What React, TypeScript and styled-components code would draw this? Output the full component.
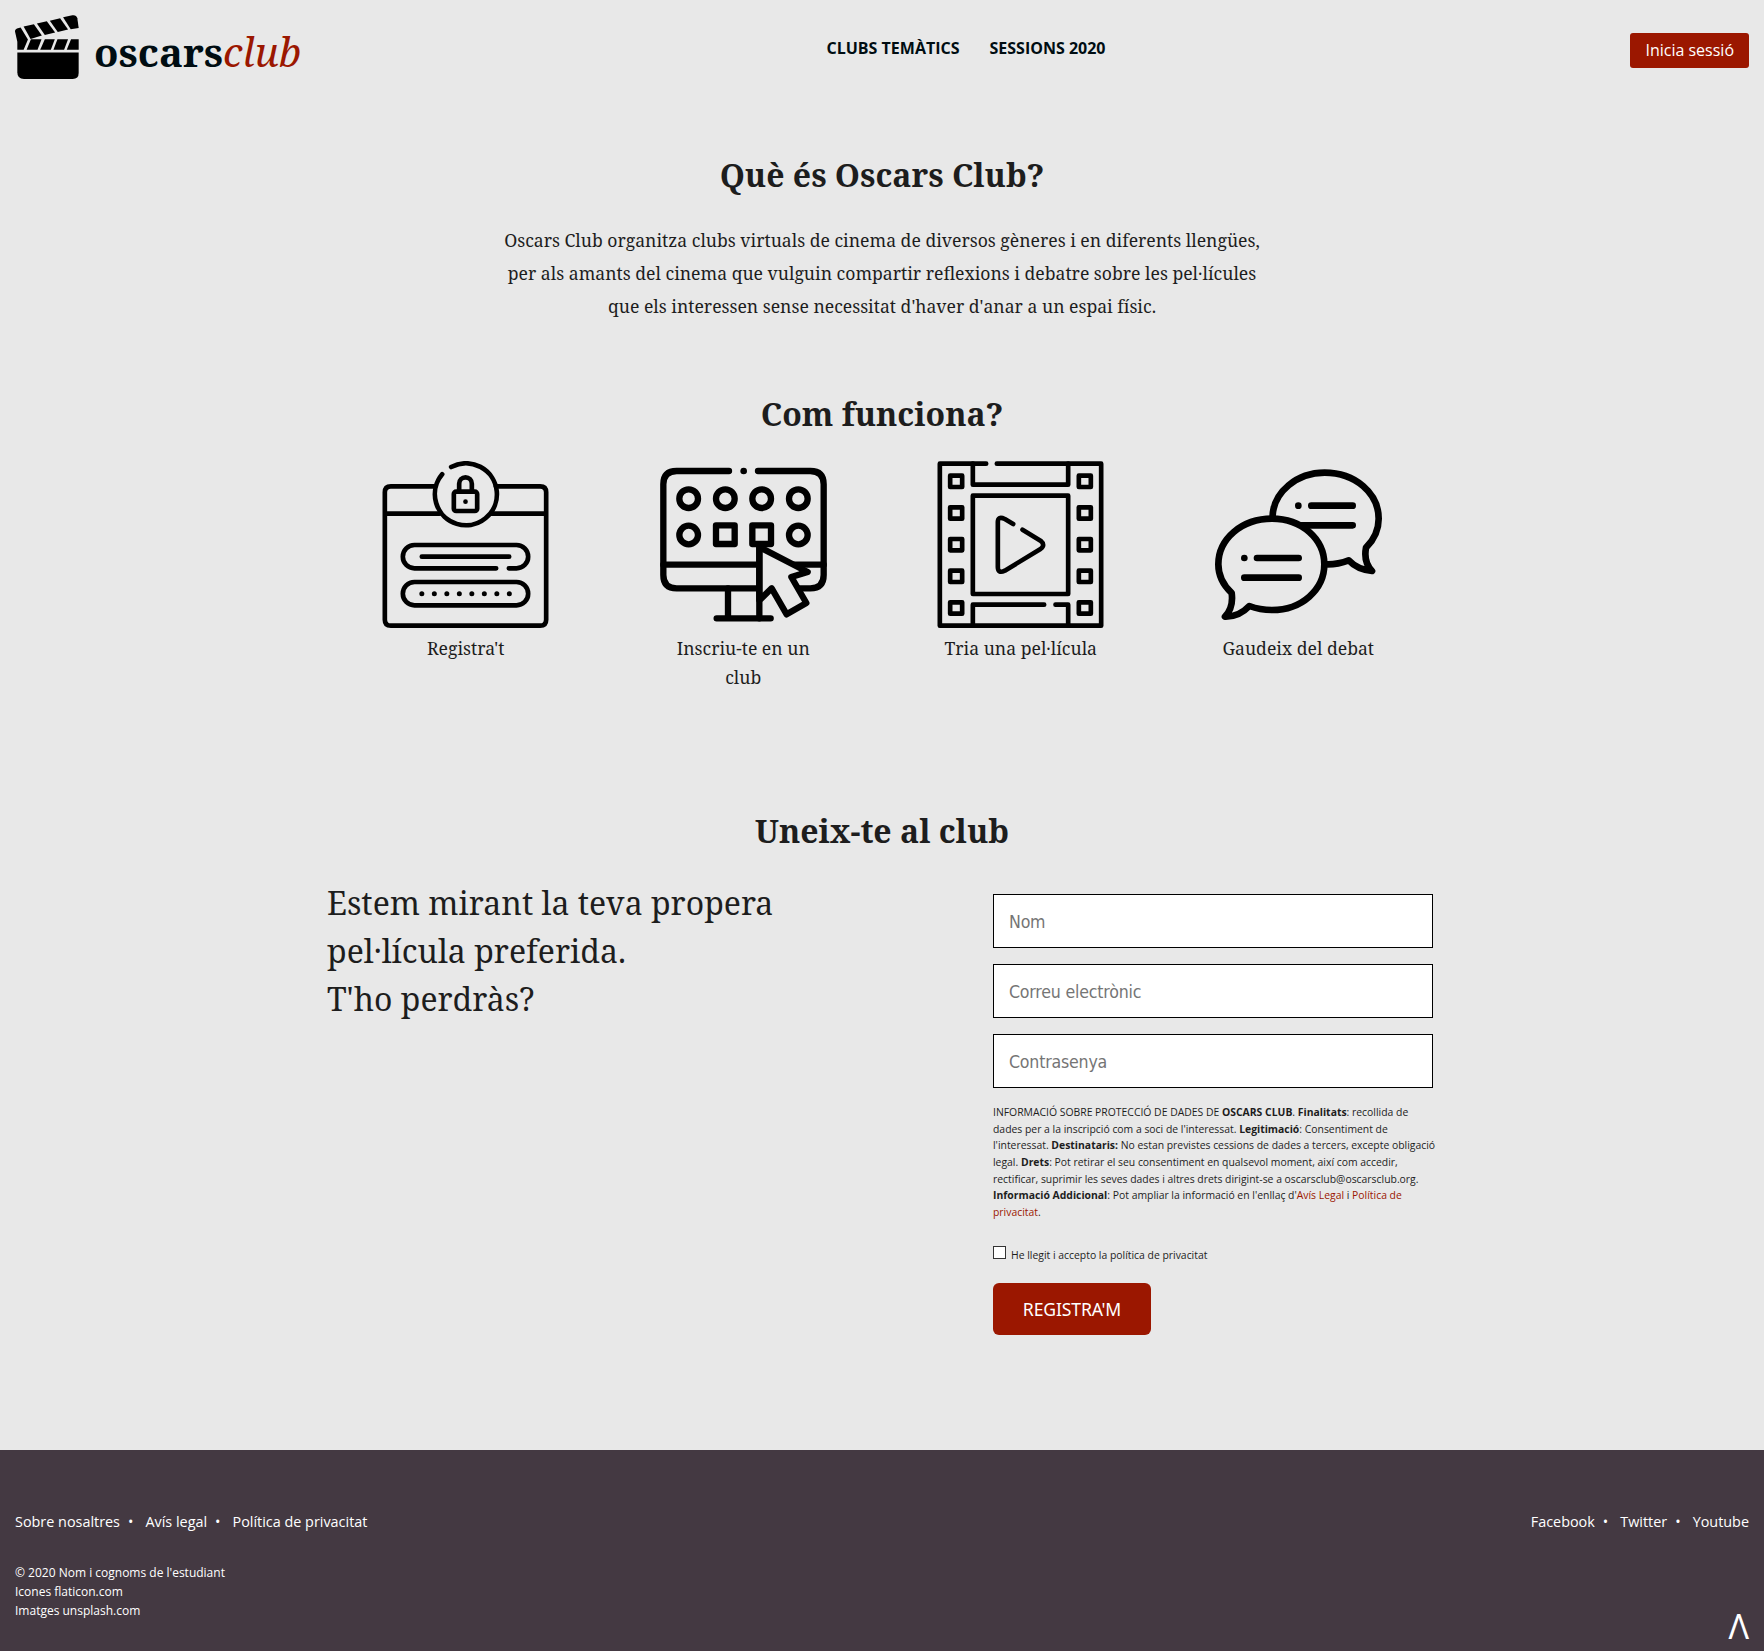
import React from "react";
import styled, { createGlobalStyle } from "styled-components";

const colors = {
  page: "#e8e8e8",
  ink: "#1d1d1d",
  heading: "#000d12",
  accent: "#9b1700",
  footer: "#443942",
};

const serif = `"Noto Serif", "Liberation Serif", serif`;
const sans = `"Open Sans", "Noto Sans", sans-serif`;

const GlobalStyle = createGlobalStyle`
  * { box-sizing: border-box; }
  body {
    margin: 0;
    background: ${colors.page};
    color: ${colors.ink};
    font-family: ${sans};
    font-size: 16px;
    line-height: 1.6;
  }
  h2, p, ul { margin: 0; padding: 0; }
  ul { list-style: none; }
  a { color: inherit; text-decoration: none; }
`;

const Page = styled.div`
  display: flex;
  flex-direction: column;
  min-height: 1651px;
`;

const Header = styled.header`
  display: grid;
  grid-template-columns: 1fr auto 1fr;
  align-items: start;
  height: 151px;
  padding: 15px 15px 0;
`;

const Brand = styled.a`
  display: flex;
  gap: 15px;
`;

const BrandMark = styled.svg`
  width: 64px;
  height: 64px;
`;

const BrandName = styled.span`
  padding-top: 5px;
  font: 700 40px/64px ${serif};
  color: ${colors.heading};

  em {
    font-weight: 400;
    color: ${colors.accent};
  }
`;

const Nav = styled.nav`
  display: flex;
  gap: 30px;
  padding-top: 20px;
  margin-left: 168px;
  font-weight: 700;
  line-height: 26px;
  color: ${colors.heading};
`;

const LoginButton = styled.a`
  justify-self: end;
  margin-top: 18px;
  padding: 0 15px;
  border-radius: 3px;
  background: ${colors.accent};
  color: #fff;
  line-height: 35px;
`;

const Main = styled.main`
  display: flex;
  flex-direction: column;
  align-items: center;
  height: 1299px;
`;

const Title = styled.h2`
  font: 700 32px/48px ${serif};
  text-align: center;
`;

const Intro = styled.section`
  display: flex;
  flex-direction: column;
  gap: 25px;
  height: 239px;
`;

const IntroText = styled.p`
  width: 776px;
  font: 400 17.6px/33px ${serif};
  text-align: center;
`;

const HowItWorks = styled.section`
  width: 1110px;
  height: 417px;
`;

const Steps = styled.ul`
  display: grid;
  grid-template-columns: repeat(4, 1fr);
  margin-top: 23px;
`;

const Step = styled.li`
  display: flex;
  flex-direction: column;
  align-items: center;
  gap: 6px;
  padding: 0 55px;
  font: 400 17.6px/28.6px ${serif};
  text-align: center;
`;

const StepIcon = styled.svg`
  display: block;
  width: 167px;
  height: 167px;
  fill: none;
  stroke: #000;
  stroke-linecap: round;
  stroke-linejoin: round;
`;

const Join = styled.section`
  width: 1110px;
`;

const JoinColumns = styled.div`
  display: flex;
  justify-content: space-between;
  margin-top: 24px;
`;

const Pitch = styled.p`
  font: 400 32px/48px ${serif};
`;

const Form = styled.form`
  display: flex;
  flex-direction: column;
  align-items: flex-start;
  width: 444px;
  padding-top: 15px;
`;

const Field = styled.input`
  width: 440px;
  height: 54px;
  margin-bottom: 16px;
  padding: 1px 15px 0;
  border: 1px solid #000;
  border-radius: 0;
  background: #fff;
  font: 400 17.6px "DejaVu Sans Condensed", "DejaVu Sans", sans-serif;
  letter-spacing: -0.2px;

  &::placeholder {
    color: #757575;
    opacity: 1;
  }
`;

const Legal = styled.p`
  font-size: 10.4px;
  line-height: 16.64px;

  a { color: ${colors.accent}; }
`;

const Consent = styled.label`
  display: flex;
  align-items: flex-start;
  gap: 5px;
  margin-top: 26px;
  font-size: 10.4px;
  line-height: 17px;
`;

const ConsentText = styled.span`
  padding-top: 1px;
`;

const Checkbox = styled.input`
  appearance: none;
  width: 13px;
  height: 13px;
  margin: 0;
  border: 1px solid #333;
  background: #fff;
`;

const SubmitButton = styled.button`
  width: 158px;
  height: 52px;
  margin-top: 19px;
  padding: 0;
  border: 0;
  border-radius: 6px;
  background: ${colors.accent};
  color: #fff;
  font: 400 17.6px "Noto Sans", sans-serif;
  letter-spacing: -0.15px;
`;

const Footer = styled.footer`
  display: grid;
  grid-template-columns: 1fr auto;
  grid-template-rows: 53px 1fr;
  height: 201px;
  padding: 60px 15px 0;
  background: ${colors.footer};
  color: #fff;
`;

const LinkList = styled.ul`
  display: flex;
  font-size: 14.4px;
  line-height: 23px;
`;

const LinkItem = styled.li`
  &:not(:last-child)::after {
    content: "•";
    margin: 0 12px 0 8px;
  }
`;

const Credits = styled.p`
  font-size: 12px;
  line-height: 19.2px;
`;

const BackToTop = styled.a`
  justify-self: end;
  padding-top: 41px;
  font-size: 34px;
  line-height: 44px;
`;

const ClapperIcon = () => (
  <BrandMark viewBox="45 44 193 193" aria-hidden="true">
    <path d="M52 157H237V219Q237 237 219 237H72Q52 237 52 217Z" />
    <path d="M45 94Q44 88 51 85L62 82L84 118L71 149H52V125Z" />
    <path d="M93 117H125L113 149H80Z" />
    <path d="M135 117H165L153 149H121Z" />
    <path d="M173 117H205L193 149H161Z" />
    <path d="M214 117H237V149H201Z" />
    <path d="M71 79L102 72L126 106L92 116Z" />
    <path d="M111 70L141 63L166 97L135 104Z" />
    <path d="M150 61L181 54L205 88L174 95Z" />
    <path d="M190 51L218 45Q230 43 233 54L237 83L213 87Z" />
  </BrandMark>
);

const RegisterIcon = () => (
  <StepIcon viewBox="37.5 212 501 501" strokeWidth={14}>
    <path d="M197 288H64Q46 288 46 306V688Q46 706 64 706H512Q530 706 530 688V306Q530 288 512 288H379" />
    <path d="M50 370H210M366 370H526" />
    <path d="M218 252A93 93 0 1 0 245 230" />
    <rect x="253" y="304" width="70" height="58" rx="7" />
    <path d="M269 303V280A19 19 0 0 1 307 280V303" />
    <circle cx="288" cy="334" r="7" fill="#000" stroke="none" />
    <path d="M380 534H135A35 35 0 0 1 135 464H441A35 35 0 0 1 441 534H418" />
    <path d="M157 499H419" />
    <rect x="100" y="575" width="376" height="70" rx="35" />
    {[0, 1, 2, 3, 4, 5, 6, 7].map((n) => (
      <circle key={n} cx={157 + n * 37.5} cy="610" r="7.5" fill="#000" stroke="none" />
    ))}
  </StepIcon>
);

const ClubIcon = () => (
  <StepIcon viewBox="870 212 501 501" strokeWidth={19}>
    <path d="M1077 242H920Q880 242 880 282V554Q880 594 920 594H1321Q1361 594 1361 554V282Q1361 242 1321 242H1164" />
    <circle cx="1121" cy="242" r="10" fill="#000" stroke="none" />
    <path d="M880 523H1361M1074 594V684M1040 684H1202" />
    {[956, 1066, 1175, 1285].map((x) => (
      <circle key={x} cx={x} cy="325" r="28" />
    ))}
    <circle cx="956" cy="434" r="28" />
    <circle cx="1285" cy="434" r="28" />
    <rect x="1038" y="405" width="56" height="56" />
    <rect x="1147" y="405" width="56" height="56" />
    <path d="M1168 470L1313 545L1264 560L1309 638L1250 672L1205 594L1168 630Z" fill={colors.page} />
    <path d="M1168 470V684" />
  </StepIcon>
);

const FilmIcon = () => (
  <StepIcon viewBox="52.5 212 501 501" strokeWidth={14}>
    <path d="M200 220H61V706H545V220H232" />
    <path d="M160 220V283H446V220" />
    <rect x="160" y="316" width="286" height="295" />
    <path d="M160 706V643H374M408 643H446V706" />
    {[273, 368, 463, 558, 653].map((y) => (
      <React.Fragment key={y}>
        <rect x="92" y={y - 17} width="36" height="34" />
        <rect x="478" y={y - 17} width="36" height="34" />
      </React.Fragment>
    ))}
    <path d="M281 401L256 386Q235 376 235 395V530Q235 551 256 541L363 476Q379 464 363 451L309 418" />
  </StepIcon>
);

const DebateIcon = () => (
  <StepIcon viewBox="885 212 501 501" strokeWidth={20}>
    <path d="M1058 375C1062 305 1130 247 1214 247C1305 247 1376 308 1376 385C1376 418 1362 448 1338 472Q1330 515 1356 542Q1312 538 1286 510Q1255 522 1223 522" />
    <circle cx="1135" cy="346" r="10" fill="#000" stroke="none" />
    <path d="M1174 346H1298M1140 405H1298" />
    <path
      d="M988 647Q1020 659 1056 659C1145 659 1213 598 1213 522C1213 446 1145 385 1056 385C965 385 895 446 895 522C895 556 910 585 935 608Q941 652 915 679Q957 680 988 647Z"
      fill={colors.page}
    />
    <circle cx="973" cy="503" r="10" fill="#000" stroke="none" />
    <path d="M1011 503H1136M973 562H1136" />
  </StepIcon>
);

const steps = [
  { label: "Registra't", Icon: RegisterIcon },
  { label: "Inscriu-te en un club", Icon: ClubIcon },
  { label: "Tria una pel·lícula", Icon: FilmIcon },
  { label: "Gaudeix del debat", Icon: DebateIcon },
];

const FooterLinks = ({ items }: { items: string[] }) => (
  <LinkList>
    {items.map((item) => (
      <LinkItem key={item}>
        <a href="#">{item}</a>
      </LinkItem>
    ))}
  </LinkList>
);

export default function App() {
  return (
    <Page>
      <GlobalStyle />
      <Header>
        <Brand href="#">
          <ClapperIcon />
          <BrandName>
            oscars<em>club</em>
          </BrandName>
        </Brand>
        <Nav>
          <a href="#">CLUBS TEMÀTICS</a>
          <a href="#">SESSIONS 2020</a>
        </Nav>
        <LoginButton href="#">Inicia sessió</LoginButton>
      </Header>

      <Main>
        <Intro>
          <Title>Què és Oscars Club?</Title>
          <IntroText>
            Oscars Club organitza clubs virtuals de cinema de diversos gèneres i en diferents
            llengües, per als amants del cinema que vulguin compartir reflexions i debatre sobre les
            pel·lícules que els interessen sense necessitat d'haver d'anar a un espai físic.
          </IntroText>
        </Intro>

        <HowItWorks>
          <Title>Com funciona?</Title>
          <Steps>
            {steps.map(({ label, Icon }) => (
              <Step key={label}>
                <Icon />
                {label}
              </Step>
            ))}
          </Steps>
        </HowItWorks>

        <Join>
          <Title>Uneix-te al club</Title>
          <JoinColumns>
            <Pitch>
              Estem mirant la teva propera
              <br />
              pel·lícula preferida.
              <br />
              T'ho perdràs?
            </Pitch>
            <Form>
              <Field type="text" placeholder="Nom" />
              <Field type="email" placeholder="Correu electrònic" />
              <Field type="password" placeholder="Contrasenya" />
              <Legal>
                INFORMACIÓ SOBRE PROTECCIÓ DE DADES DE <strong>OSCARS CLUB</strong>.{" "}
                <strong>Finalitats</strong>: recollida de dades per a la inscripció com a soci de
                l'interessat. <strong>Legitimació</strong>: Consentiment de l'interessat.{" "}
                <strong>Destinataris:</strong> No estan previstes cessions de dades a tercers,
                excepte obligació legal. <strong>Drets</strong>: Pot retirar el seu consentiment en
                qualsevol moment, així com accedir, rectificar, suprimir les seves dades i altres
                drets dirigint-se a oscarsclub@oscarsclub.org.{" "}
                <strong>Informació Addicional</strong>: Pot ampliar la informació en l'enllaç d'
                <a href="#">Avís Legal</a> i <a href="#">Política de privacitat</a>.
              </Legal>
              <Consent>
                <Checkbox type="checkbox" />
                <ConsentText>He llegit i accepto la política de privacitat</ConsentText>
              </Consent>
              <SubmitButton type="button">REGISTRA'M</SubmitButton>
            </Form>
          </JoinColumns>
        </Join>
      </Main>

      <Footer>
        <FooterLinks items={["Sobre nosaltres", "Avís legal", "Política de privacitat"]} />
        <FooterLinks items={["Facebook", "Twitter", "Youtube"]} />
        <Credits>
          © 2020 Nom i cognoms de l'estudiant
          <br />
          Icones flaticon.com
          <br />
          Imatges unsplash.com
        </Credits>
        <BackToTop href="#">Λ</BackToTop>
      </Footer>
    </Page>
  );
}
